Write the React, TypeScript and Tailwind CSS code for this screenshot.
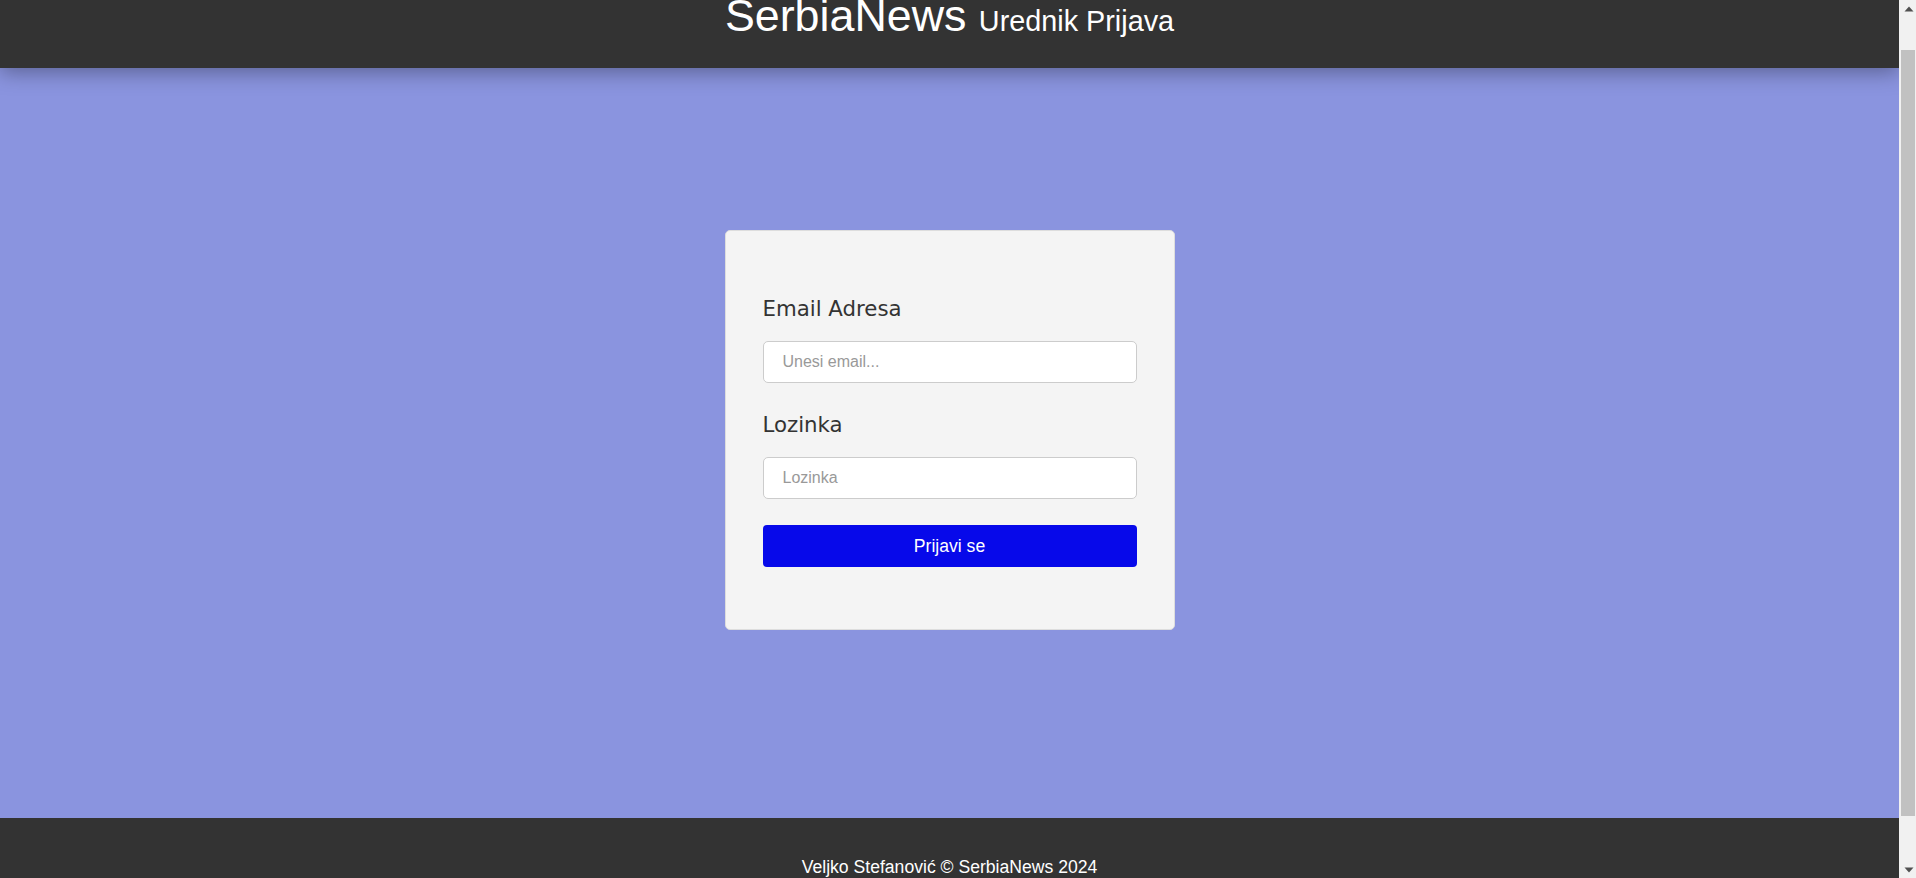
import { useEffect, useRef } from "react";

function ScrollArrow({ up }: { up: boolean }) {
  return (
    <div className="h-[17px] flex items-center justify-end pr-[2px]">
      <svg width="10" height="6" viewBox="0 0 10 6">
        {up ? <path d="M0.5 5.5 L5 0.5 L9.5 5.5 Z" fill="#505050" /> : <path d="M0.5 0.5 L5 5.5 L9.5 0.5 Z" fill="#505050" />}
      </svg>
    </div>
  );
}

export default function App() {
  const ref = useRef<HTMLDivElement>(null);
  useEffect(() => {
    if (ref.current) ref.current.scrollTop = 38;
  }, []);

  return (
    <div className="flex h-screen font-['Liberation_Sans',Arial,sans-serif]">
      <div
        ref={ref}
        className="flex-1 overflow-y-auto bg-[#8a94df] [scrollbar-width:none]"
      >
        <div className="flex flex-col">
          <header className="relative z-10 h-[106px] bg-[#333333] text-white text-center shadow-[0_4px_20px_rgba(0,0,0,0.35)]">
            <h1 className="pt-[27px] text-[44.8px] leading-[52px] font-normal">
              SerbiaNews <span className="text-[28.8px]">Urednik Prijava</span>
            </h1>
          </header>

          <main className="flex justify-center pt-[162px] pb-[188px]">
            <div className="w-[450px] rounded-[5px] border border-[#dddddd] bg-[#f4f4f4] px-[37px] pt-[65px] pb-[62px]">
              <label className="block text-[21.3px] leading-[25px] text-[#333333] font-['DejaVu_Sans',sans-serif]">
                Email Adresa
              </label>
              <input
                type="email"
                placeholder="Unesi email..."
                className="mt-[20px] block h-[42px] w-full rounded-[5px] border border-[#cccccc] bg-white px-[19px] text-[16px] text-[#333] placeholder:text-[#999999] outline-none"
              />
              <label className="mt-[29px] block text-[21.3px] leading-[25px] text-[#333333] font-['DejaVu_Sans',sans-serif]">
                Lozinka
              </label>
              <input
                type="password"
                placeholder="Lozinka"
                className="mt-[20px] block h-[42px] w-full rounded-[5px] border border-[#cccccc] bg-white px-[19px] text-[16px] text-[#333] placeholder:text-[#999999] outline-none"
              />
              <button className="mt-[26px] block h-[42px] w-full rounded-[4px] bg-[#0709ea] text-white text-[17.6px]">
                Prijavi se
              </button>
            </div>
          </main>

          <footer className="h-[112px] bg-[#333333] text-white text-center pt-[36px]">
            <p className="text-[17.6px]">Veljko Stefanović © SerbiaNews 2024</p>
          </footer>
        </div>
      </div>

      <div className="w-[17px] shrink-0 flex flex-col bg-[#f1f1f1]">
        <ScrollArrow up />
        <div className="h-[33px]" />
        <div className="h-[766px] ml-[2px] mr-[1px] bg-[#c1c1c1]" />
        <div className="flex-1" />
        <ScrollArrow up={false} />
      </div>
    </div>
  );
}
